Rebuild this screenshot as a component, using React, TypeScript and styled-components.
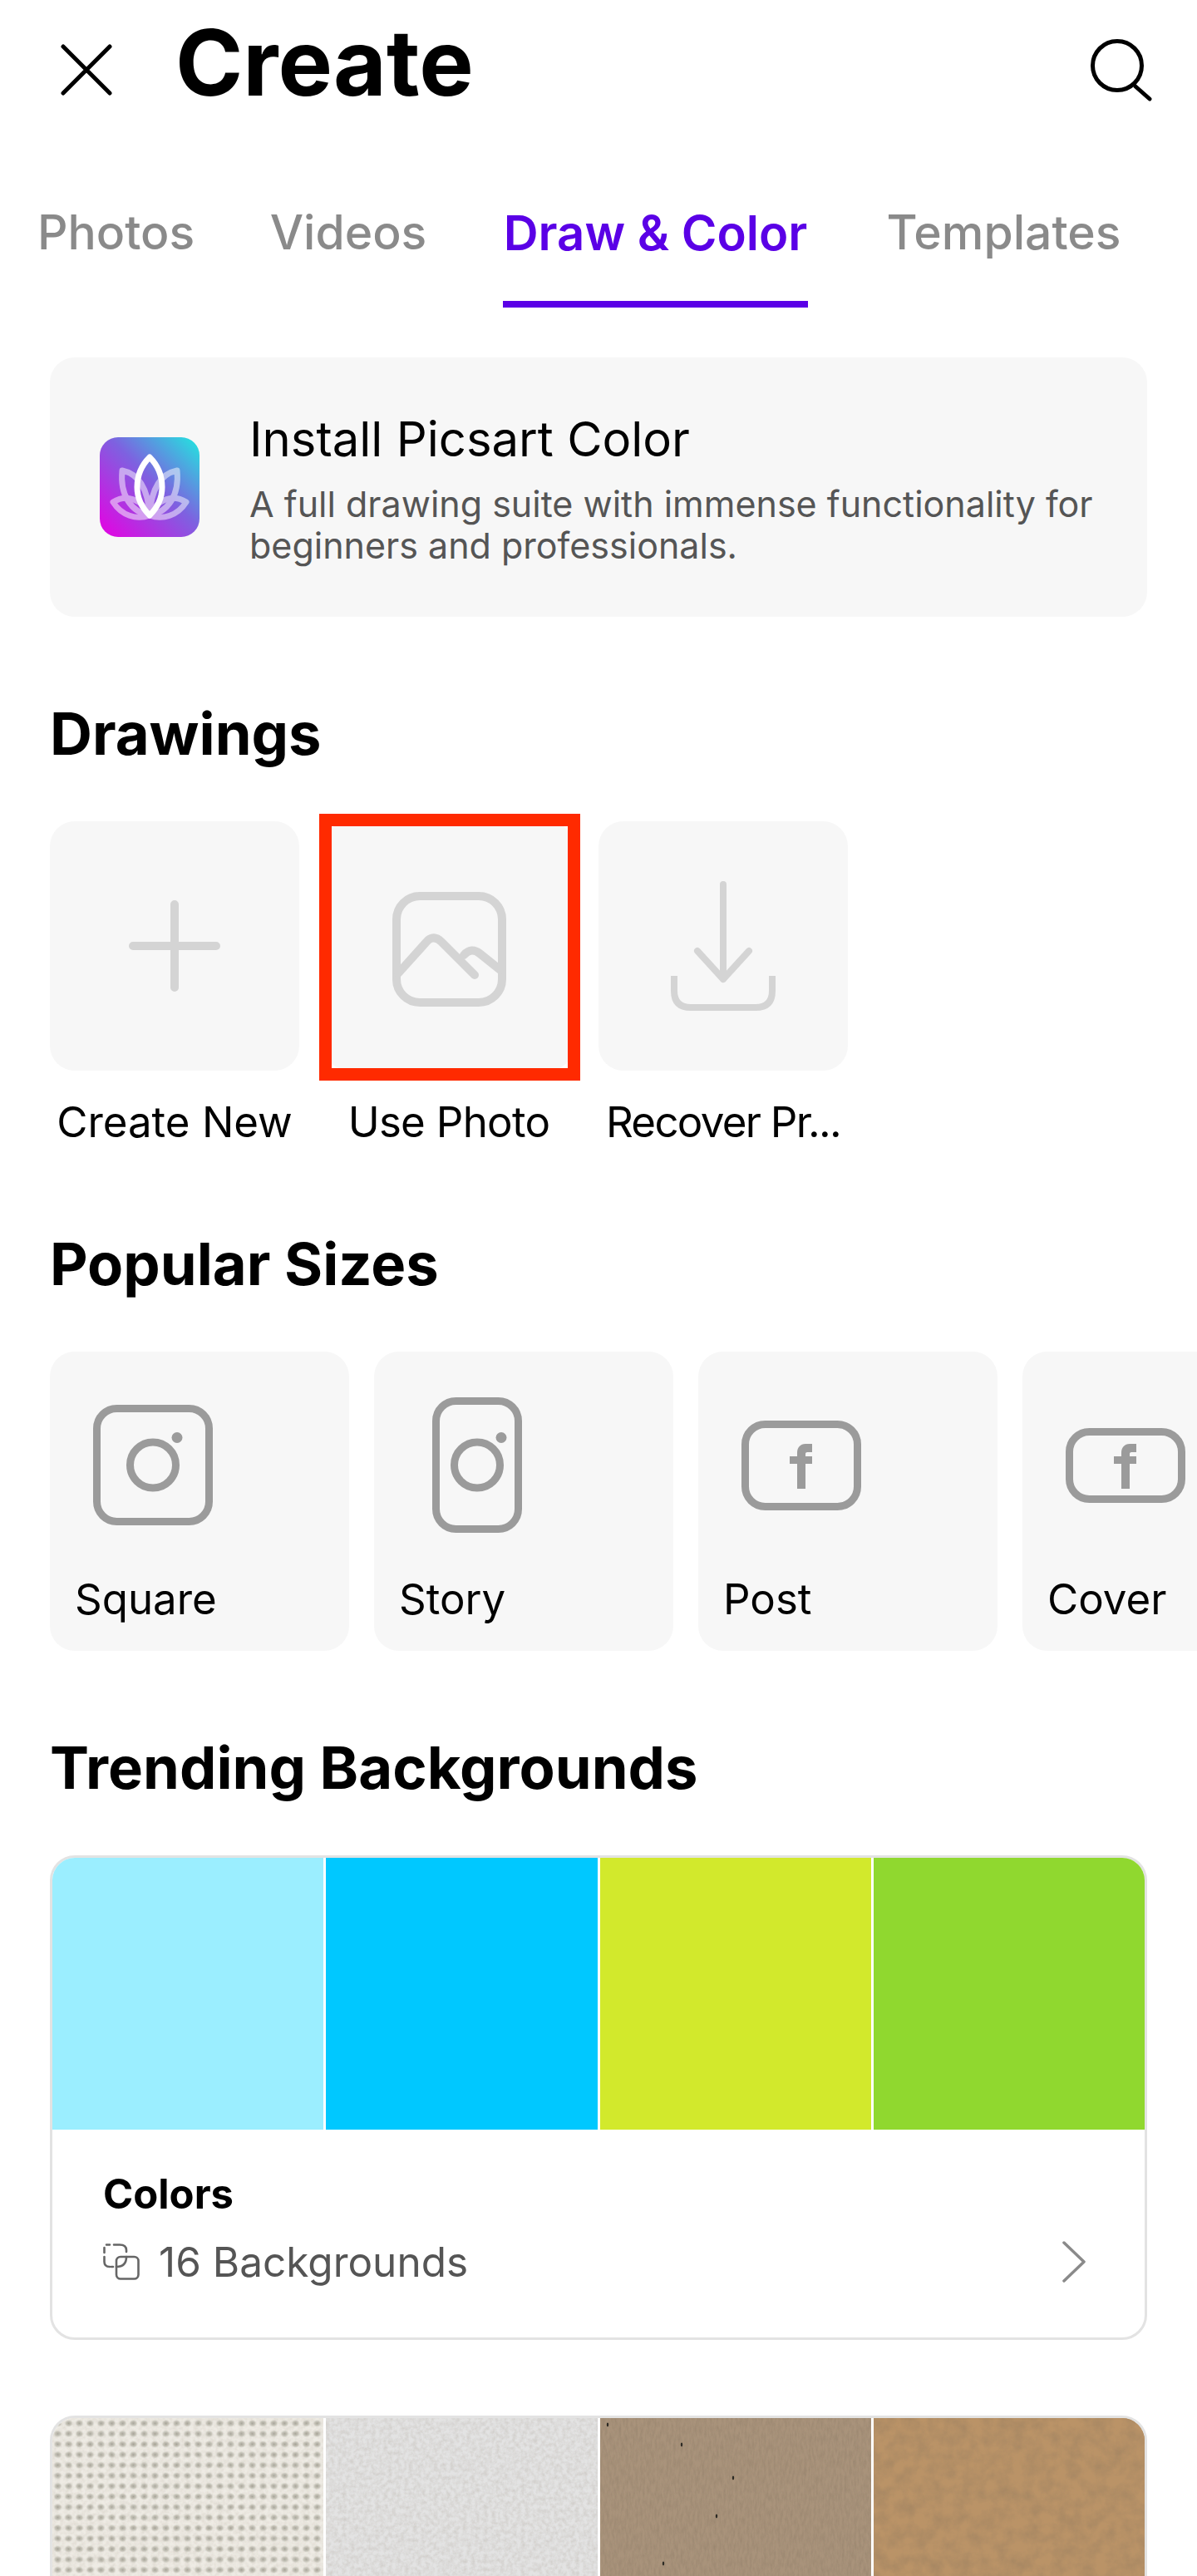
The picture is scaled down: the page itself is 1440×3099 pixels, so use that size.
import React from 'react';
import styled, { createGlobalStyle } from 'styled-components';

const GlobalStyle = createGlobalStyle`
  html, body {
    margin: 0;
    padding: 0;
    background: #fff;
    overflow: hidden;
  }
  body {
    font-family: 'Inter', 'Liberation Sans', sans-serif;
    color: #000;
  }
`;

const Page = styled.div`
  width: 1440px;
  height: 3099px;
  overflow: hidden;
  background: #fff;
`;

const Header = styled.header`
  height: 168px;
  padding: 0 53px 0 73px;
  display: flex;
  align-items: center;
  justify-content: space-between;
  box-sizing: border-box;
`;

const HeaderLeft = styled.div`
  display: flex;
  align-items: center;
  gap: 76px;
`;

const Title = styled.h1`
  margin: 0 0 18px;
  font-size: 110px;
  line-height: 120px;
  font-weight: 700;
  letter-spacing: 0;
`;

const Tabs = styled.nav`
  display: grid;
  grid-template-columns: 187px 186px 367px 285px;
  column-gap: 93px;
  padding-left: 46px;
`;

const Tab = styled.div<{ $active?: boolean }>`
  padding: 77px 0 47px;
  border-bottom: 8px solid ${(props) => (props.$active ? '#5a00e6' : 'transparent')};
  font-size: ${(props) => (props.$active ? 58 : 57)}px;
  line-height: 70px;
  font-weight: ${(props) => (props.$active ? 600 : 500)};
  color: ${(props) => (props.$active ? '#5a00e6' : '#8a8a8a')};
  white-space: nowrap;
  display: flex;
  justify-content: center;
`;

const InstallCard = styled.section`
  margin: 60px 60px 0;
  height: 312px;
  box-sizing: border-box;
  padding-left: 60px;
  display: flex;
  align-items: center;
  gap: 60px;
  background: #f7f7f7;
  border-radius: 30px;
`;

const AppIcon = styled.svg`
  width: 120px;
  height: 120px;
  flex-shrink: 0;
`;

const InstallText = styled.div`
  display: flex;
  flex-direction: column;
`;

const InstallTitle = styled.div`
  font-size: 58px;
  line-height: 70px;
  margin-bottom: 18px;
  margin-top: 1px;
`;

const InstallDesc = styled.div`
  font-size: 43px;
  line-height: 50px;
  color: #555;
`;

const Heading = styled.h2`
  margin: 101px 60px 65px;
  font-size: 70.5px;
  line-height: 80px;
  font-weight: 700;
`;

const DrawRow = styled.div`
  display: flex;
  gap: 30px;
  padding-left: 60px;
`;

const DrawItem = styled.div`
  width: 300px;
  position: relative;
`;

const DrawTile = styled.div`
  height: 300px;
  background: #f7f7f7;
  border-radius: 30px;
  display: flex;
  align-items: center;
  justify-content: center;
`;

const DrawLabel = styled.div<{ $tracking?: number }>`
  margin-top: 32px;
  font-size: 51px;
  line-height: 60px;
  letter-spacing: ${(props) => props.$tracking ?? 0}px;
  text-align: center;
  white-space: nowrap;
`;

/* annotation frame laid over the second tile */
const Highlight = styled.div`
  position: absolute;
  left: -6px;
  top: -9px;
  width: 314px;
  height: 321px;
  box-sizing: border-box;
  border: 15px solid #ff2a00;
`;

const SizeRow = styled.div`
  display: flex;
  gap: 30px;
  padding-left: 60px;
  overflow: hidden;
`;

const SizeTile = styled.div`
  width: 360px;
  height: 360px;
  flex-shrink: 0;
  background: #f7f7f7;
  border-radius: 30px;
`;

const SizeIconSlot = styled.div`
  width: 248px;
  height: 163px;
  margin-top: 55px;
  display: flex;
  align-items: center;
  justify-content: center;
`;

const SizeLabel = styled.div`
  margin-top: 50px;
  padding-left: 30px;
  font-size: 51px;
  line-height: 60px;
`;

const BgCard = styled.article`
  margin: 0 60px 91px;
  border: 3px solid #e3e3e3;
  border-radius: 30px;
  overflow: hidden;
  background: #fff;
`;

const Swatches = styled.div`
  display: grid;
  grid-template-columns: repeat(4, 1fr);
  column-gap: 3px;
  height: 327px;
`;

const Swatch = styled.div<{ $color: string }>`
  background: ${(props) => props.$color};
  overflow: hidden;
`;

const TextureSvg = styled.svg`
  display: block;
  width: 100%;
  height: 100%;
`;

const BgFooter = styled.div`
  height: 250px;
  box-sizing: border-box;
  padding: 48px 71px 0 61px;
`;

const BgName = styled.div`
  font-size: 49px;
  line-height: 60px;
  font-weight: 700;
`;

const BgMeta = styled.div`
  margin-top: 21px;
  height: 60px;
  display: flex;
  align-items: center;
  gap: 23px;
  font-size: 49.5px;
  color: #555;
`;

const Chevron = styled.svg`
  margin-left: auto;
`;

const CloseIcon = () => (
  <svg width="62" height="62" viewBox="0 0 62 62" fill="none" stroke="#000" strokeWidth="5" strokeLinecap="round">
    <path d="M3 3 59 59M59 3 3 59" />
  </svg>
);

const SearchIcon = () => (
  <svg width="76" height="76" viewBox="0 0 76 76" fill="none" stroke="#000" strokeWidth="5" strokeLinecap="round">
    <circle cx="33" cy="33" r="29.5" />
    <path d="M55 58 72 73" />
  </svg>
);

const LotusLogo = () => (
  <AppIcon viewBox="0 0 120 120">
    <defs>
      <linearGradient id="logoGrad" x1="0" y1="1" x2="1" y2="0">
        <stop offset="0.08" stopColor="#d90de2" />
        <stop offset="0.55" stopColor="#7d62e0" />
        <stop offset="1" stopColor="#1fe9df" />
      </linearGradient>
    </defs>
    <rect width="120" height="120" rx="22" fill="url(#logoGrad)" />
    <g fill="none" stroke="#fff" strokeWidth="7" strokeLinejoin="round" opacity="0.5">
      <path d="M60 94C38 90 24 70 27 40C46 44 58 60 60 94Z" />
      <path d="M60 94C82 90 96 70 93 40C74 44 62 60 60 94Z" />
      <path d="M60 94C44 100 26 94 16 78C32 68 50 74 60 94Z" />
      <path d="M60 94C76 100 94 94 104 78C88 68 70 74 60 94Z" />
    </g>
    <path d="M60 94C50 84 45 72 45 60C45 46 51 33 60 24C69 33 75 46 75 60C75 72 70 84 60 94Z" fill="none" stroke="#fff" strokeWidth="7" strokeLinejoin="round" />
  </AppIcon>
);

const PlusIcon = () => (
  <svg width="110" height="110" viewBox="0 0 110 110" fill="none" stroke="#d4d4d4" strokeWidth="10" strokeLinecap="round">
    <path d="M55 5V105M5 55H105" />
  </svg>
);

const PhotoIcon = () => (
  <svg width="150" height="150" viewBox="0 0 150 150" fill="none" stroke="#d4d4d4" strokeWidth="10" strokeLinecap="round" strokeLinejoin="round">
    <rect x="12" y="15" width="127" height="128" rx="28" />
    <path d="M14 108 50 68Q58 62 66 70L106 110M93 86Q102 76 112 84L137 104" />
  </svg>
);

const DownloadIcon = () => (
  <svg width="126" height="156" viewBox="0 0 126 156" fill="none" stroke="#d4d4d4" strokeWidth="8" strokeLinecap="round" strokeLinejoin="round">
    <path d="M63 4V118M32 84 63 118 94 84" />
    <path d="M4 114V132Q4 152 24 152H102Q122 152 122 132V114" strokeLinecap="butt" />
  </svg>
);

const InstagramIcon = ({ width, height }: { width: number; height: number }) => (
  <svg width={width} height={height} viewBox={`0 0 ${width} ${height}`} fill="none" stroke="#9b9b9b" strokeWidth="9">
    <rect x="4.5" y="4.5" width={width - 9} height={height - 9} rx="24" />
    <circle cx={width / 2} cy={height / 2} r="27.5" />
    <circle cx={width / 2 + 29} cy={height / 2 - 33} r="6.5" fill="#9b9b9b" stroke="none" />
  </svg>
);

const FacebookIcon = ({ height }: { height: number }) => (
  <svg width="144" height={height} viewBox={`0 0 144 ${height}`} fill="none" stroke="#9b9b9b" strokeWidth="9">
    <rect x="4.5" y="4.5" width="135" height={height - 9} rx="24" />
    <path
      transform={`translate(58 ${height / 2 - 26})`}
      d="M9 54V24H0V15H9V11C9 4 13 0 19 0H27V10H22C19 10 19 11 19 13V15H27V24H19V54Z"
      fill="#9b9b9b"
      stroke="none"
    />
  </svg>
);

const StackIcon = () => (
  <svg width="44" height="44" viewBox="0 0 44 44" fill="none" stroke="#666" strokeWidth="2.6" strokeLinecap="round">
    <path d="M4 1.5H8M13 1.5H20Q28 1.5 28 8V10M1.5 5V11M1.5 16V22Q1.5 28 8 28M10 28H12" />
    <path d="M28 16Q28 28 16 28" />
    <rect x="16" y="16" width="26.5" height="26.5" rx="5" />
  </svg>
);

const ChevronIcon = () => (
  <Chevron width="28" height="50" viewBox="0 0 28 50" fill="none" stroke="#8a8a8a" strokeWidth="3.5" strokeLinecap="round" strokeLinejoin="round">
    <path d="M2 2 26 25 2 48" />
  </Chevron>
);

type TextureProps = {
  id: string;
  base: string;
  freq: string;
  amount: number;
  octaves?: number;
  weave?: boolean;
  specks?: number[][];
};

// noise standing in for the paper and canvas photos
const Texture = ({ id, base, freq, amount, octaves = 3, weave, specks }: TextureProps) => (
  <TextureSvg>
    <defs>
      <filter id={id} x="0" y="0" width="100%" height="100%">
        <feTurbulence type="fractalNoise" baseFrequency={freq} numOctaves={octaves} seed={id.length * 7} />
        <feColorMatrix values={`0 0 0 0 0.2 0 0 0 0 0.15 0 0 0 0 0.1 ${amount} 0 0 0 ${-amount * 0.32}`} />
      </filter>
      {weave && (
        <>
          <radialGradient id={`${id}-dot`}>
            <stop offset="0" stopColor="#a9a79c" />
            <stop offset="0.55" stopColor="#c6c4b9" stopOpacity="0.85" />
            <stop offset="1" stopColor="#eeece6" stopOpacity="0" />
          </radialGradient>
          <pattern id={`${id}-weave`} width="13" height="12.6" patternUnits="userSpaceOnUse">
            <rect width="13" height="12.6" fill={base} />
            <ellipse cx="6.5" cy="6.3" rx="6" ry="5" fill={`url(#${id}-dot)`} />
          </pattern>
        </>
      )}
    </defs>
    <rect width="100%" height="100%" fill={weave ? `url(#${id}-weave)` : base} />
    <rect width="100%" height="100%" filter={`url(#${id})`} />
    {specks?.map(([cx, cy]) => (
      <ellipse key={`${cx}-${cy}`} cx={cx} cy={cy} rx="1.2" ry="2.4" fill="#2c2a24" />
    ))}
  </TextureSvg>
);

const tabs = ['Photos', 'Videos', 'Draw & Color', 'Templates'];
const colors = ['#9beeff', '#00c8ff', '#d2e92c', '#90d82f'];

const App = () => {
  return (
    <Page>
      <GlobalStyle />
      <Header>
        <HeaderLeft>
          <CloseIcon />
          <Title>Create</Title>
        </HeaderLeft>
        <SearchIcon />
      </Header>
      <Tabs>
        {tabs.map((tab, index) => (
          <Tab key={tab} $active={index === 2}>
            {tab}
          </Tab>
        ))}
      </Tabs>

      <InstallCard>
        <LotusLogo />
        <InstallText>
          <InstallTitle>Install Picsart Color</InstallTitle>
          <InstallDesc>
            A full drawing suite with immense functionality for
            <br />
            beginners and professionals.
          </InstallDesc>
        </InstallText>
      </InstallCard>

      <Heading>Drawings</Heading>
      <DrawRow>
        <DrawItem>
          <DrawTile>
            <PlusIcon />
          </DrawTile>
          <DrawLabel>Create New</DrawLabel>
        </DrawItem>
        <DrawItem>
          <DrawTile>
            <PhotoIcon />
          </DrawTile>
          <DrawLabel $tracking={-0.7}>Use Photo</DrawLabel>
          <Highlight />
        </DrawItem>
        <DrawItem>
          <DrawTile>
            <DownloadIcon />
          </DrawTile>
          <DrawLabel $tracking={-1.7}>Recover Pr...</DrawLabel>
        </DrawItem>
      </DrawRow>

      <Heading>Popular Sizes</Heading>
      <SizeRow>
        <SizeTile>
          <SizeIconSlot>
            <InstagramIcon width={144} height={145} />
          </SizeIconSlot>
          <SizeLabel>Square</SizeLabel>
        </SizeTile>
        <SizeTile>
          <SizeIconSlot>
            <InstagramIcon width={108} height={163} />
          </SizeIconSlot>
          <SizeLabel>Story</SizeLabel>
        </SizeTile>
        <SizeTile>
          <SizeIconSlot>
            <FacebookIcon height={108} />
          </SizeIconSlot>
          <SizeLabel>Post</SizeLabel>
        </SizeTile>
        <SizeTile>
          <SizeIconSlot>
            <FacebookIcon height={90} />
          </SizeIconSlot>
          <SizeLabel>Cover</SizeLabel>
        </SizeTile>
      </SizeRow>

      <Heading>Trending Backgrounds</Heading>
      <BgCard>
        <Swatches>
          {colors.map((color) => (
            <Swatch key={color} $color={color} />
          ))}
        </Swatches>
        <BgFooter>
          <BgName>Colors</BgName>
          <BgMeta>
            <StackIcon />
            16 Backgrounds
            <ChevronIcon />
          </BgMeta>
        </BgFooter>
      </BgCard>
      <BgCard>
        <Swatches>
          <Swatch $color="#ece9e2">
            <Texture id="canvas" base="#eeebe4" freq="0.2" amount={0.2} weave />
          </Swatch>
          <Swatch $color="#dcdcdc">
            <Texture id="paperwhite" base="#e3e3e3" freq="0.2" amount={0.3} octaves={4} />
          </Swatch>
          <Swatch $color="#a18c74">
            <Texture
              id="kraftgreyish"
              base="#a9937b"
              freq="0.35 0.1"
              amount={0.5}
              octaves={4}
              specks={[[9, 8], [98, 32], [140, 118], [160, 72], [76, 175]]}
            />
          </Swatch>
          <Swatch $color="#b28c60">
            <Texture id="kraftbrownpaper" base="#ba9367" freq="0.06" amount={0.5} octaves={6} />
          </Swatch>
        </Swatches>
      </BgCard>
    </Page>
  );
};

export default App;
